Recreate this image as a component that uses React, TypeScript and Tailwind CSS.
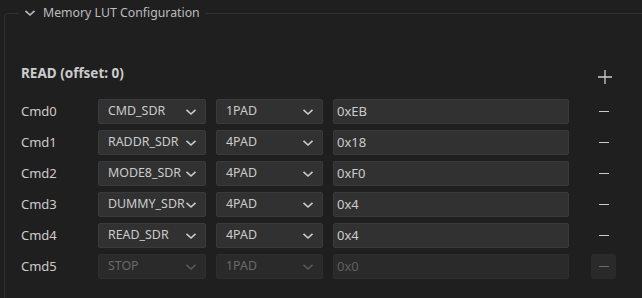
import React from "react";

const font = { fontFamily: '"Noto Sans", "Open Sans", Arial, sans-serif' };

function Chevron({ className = "" }: { className?: string }) {
  return (
    <svg width="12" height="8" viewBox="0 0 12 8" className={className} fill="none">
      <path d="M1.5 1.8 L6 6 L10.5 1.8" stroke="currentColor" strokeWidth="1.6" />
    </svg>
  );
}

type Row = { label: string; op: string; pad: string; val: string; disabled?: boolean };

const rows: Row[] = [
  { label: "Cmd0", op: "CMD_SDR", pad: "1PAD", val: "0xEB" },
  { label: "Cmd1", op: "RADDR_SDR", pad: "4PAD", val: "0x18" },
  { label: "Cmd2", op: "MODE8_SDR", pad: "4PAD", val: "0xF0" },
  { label: "Cmd3", op: "DUMMY_SDR", pad: "4PAD", val: "0x4" },
  { label: "Cmd4", op: "READ_SDR", pad: "4PAD", val: "0x4" },
  { label: "Cmd5", op: "STOP", pad: "1PAD", val: "0x0", disabled: true },
];

function Select({ text, disabled, w }: { text: string; disabled?: boolean; w: string }) {
  return (
    <div
      className={`${w} h-[25px] flex items-center justify-between rounded-[2px] border pl-[9px] pr-[8px] text-[12.4px] ${
        disabled
          ? "bg-[#2a2a2a] border-[#2e2e2e] text-[#6a6a6a]"
          : "bg-[#313131] border-[#3a3a3a] text-[#cccccc]"
      }`}
    >
      <span className="whitespace-nowrap">{text}</span>
      <Chevron className={disabled ? "text-[#5a5a5a] shrink-0" : "text-[#cccccc] shrink-0"} />
    </div>
  );
}

export default function App() {
  return (
    <div className="w-[642px] h-[298px] bg-[#1f1f1f] overflow-hidden pt-[3px]" style={font}>
      <fieldset className="ml-[4px] w-[680px] h-[320px] border border-[#303030] rounded-[4px] pl-[16px]">
        <legend className="-ml-[2px] px-[5px] flex items-center gap-[7px] text-[12.3px] text-[#bdbdbd] leading-[20px]">
          <Chevron className="text-[#bdbdbd]" />
          <span>Memory LUT Configuration</span>
        </legend>
        <div className="w-[596px] mt-[41px] flex items-center justify-between">
          <span className="text-[13.5px] font-bold text-[#cccccc] -mt-[6px]">READ (offset: 0)</span>
          <div className="w-[25px] h-[25px] flex items-center justify-center">
            <svg width="16" height="16" viewBox="0 0 16 16">
              <path d="M8 1 V15 M1 8 H15" stroke="#cccccc" strokeWidth="1.3" />
            </svg>
          </div>
        </div>
        <div className="mt-[10px] flex flex-col gap-[6px]">
          {rows.map((r) => (
            <div key={r.label} className="flex items-center h-[25px]">
              <span className="w-[77px] text-[13px] text-[#cccccc]">{r.label}</span>
              <Select text={r.op} disabled={r.disabled} w="w-[108px]" />
              <div className="w-[10px]" />
              <Select text={r.pad} disabled={r.disabled} w="w-[107px]" />
              <div className="w-[10px]" />
              <div
                className={`w-[236px] h-[25px] flex items-center rounded-[2px] border pl-[3px] text-[13px] ${
                  r.disabled
                    ? "bg-[#2a2a2a] border-[#2e2e2e] text-[#5f5f5f]"
                    : "bg-[#313131] border-[#3a3a3a] text-[#cccccc]"
                }`}
              >
                {r.val}
              </div>
              <div className="w-[22px]" />
              <div
                className={`w-[25px] h-[25px] flex items-center justify-center rounded-[3px] ${
                  r.disabled ? "bg-[#2a2a2a]" : ""
                }`}
              >
                <div className={`w-[10px] h-[1.5px] ${r.disabled ? "bg-[#6a6a6a]" : "bg-[#cccccc]"}`} />
              </div>
            </div>
          ))}
        </div>
      </fieldset>
    </div>
  );
}
